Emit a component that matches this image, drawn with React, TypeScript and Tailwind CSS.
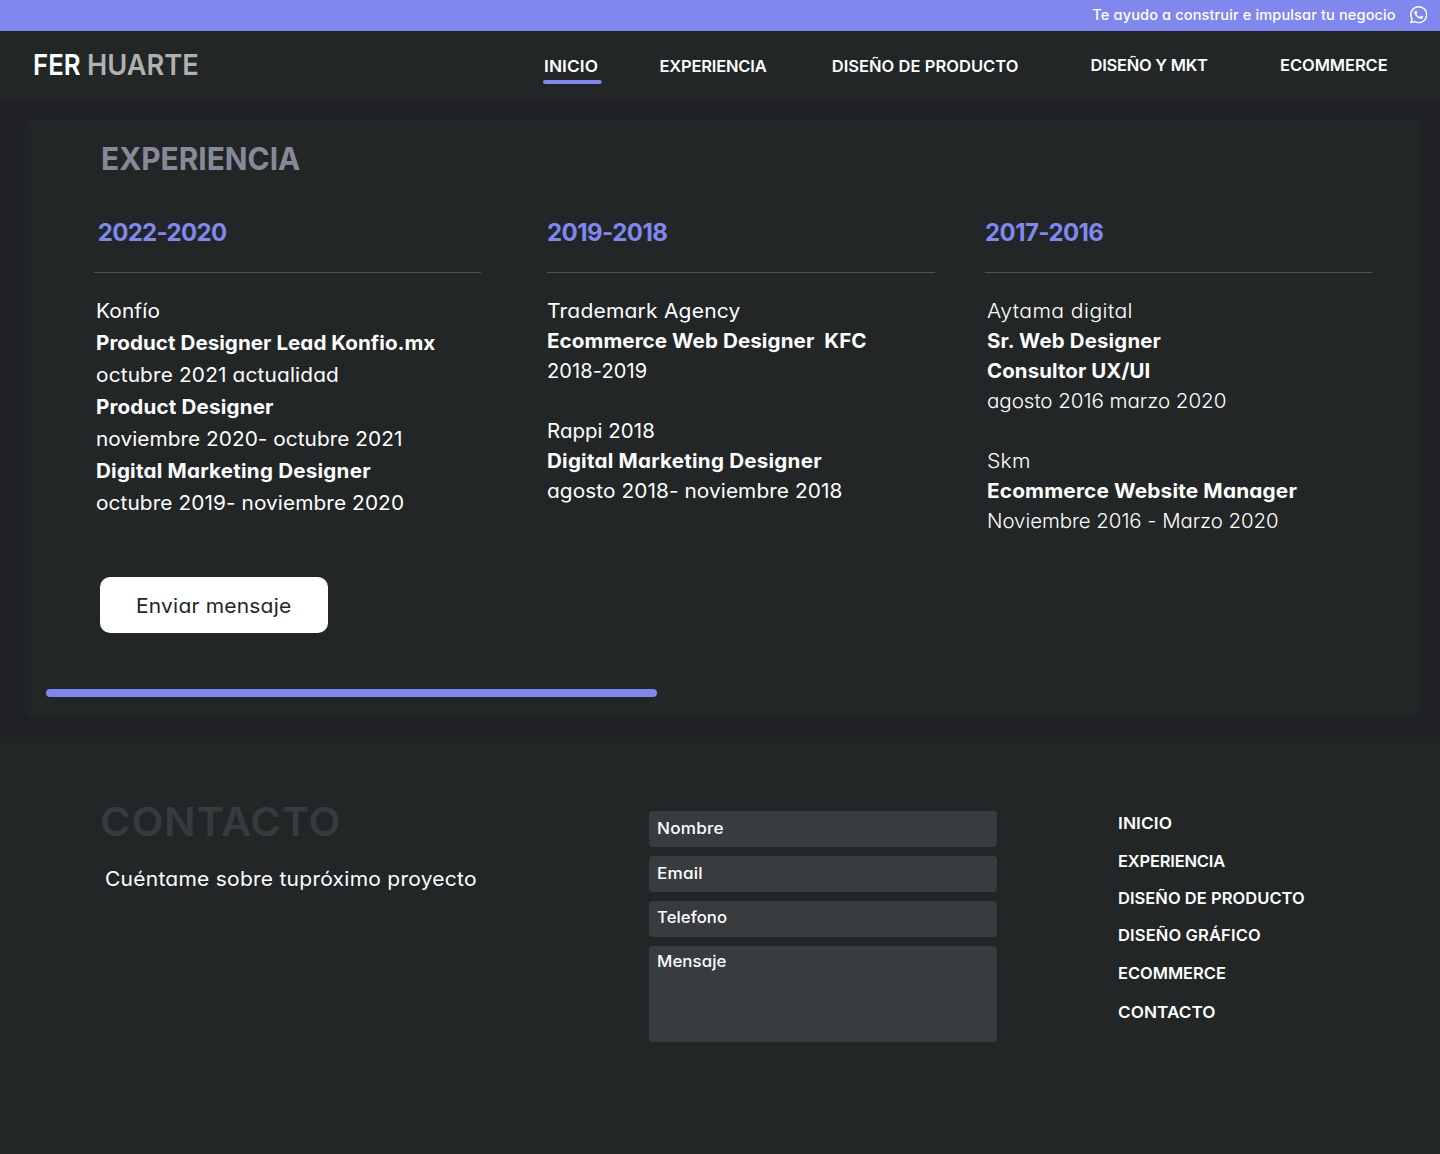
import { BsWhatsapp } from "react-icons/bs";

type Line = { text: string; className: string };

const navLinks: Line[] = [
  { text: "INICIO", className: "ml-[543.5px] scale-x-[1.05] tracking-[0.08px] pt-0.5" },
  { text: "EXPERIENCIA", className: "ml-[659.5px] tracking-[-0.19px] pt-0.5" },
  { text: "DISEÑO DE PRODUCTO", className: "ml-[831.7px] tracking-[0.04px] pt-0.5" },
  { text: "DISEÑO Y MKT", className: "ml-[1090.5px] tracking-[-0.25px]" },
  { text: "ECOMMERCE", className: "ml-[1280px] tracking-[-0.06px]" },
];

const konfio: Line[] = [
  { text: "Konfío", className: "scale-x-[1.04] tracking-[0.14px]" },
  { text: "Product Designer Lead Konfio.mx", className: "font-bold scale-x-[1.03] tracking-[0.03px]" },
  { text: "octubre 2021 actualidad", className: "scale-x-[1.04] tracking-[0.16px]" },
  { text: "Product Designer", className: "font-bold scale-x-[1.03] tracking-[0.16px]" },
  { text: "noviembre 2020- octubre 2021", className: "scale-x-[1.04] tracking-[0.04px]" },
  { text: "Digital Marketing Designer", className: "font-bold scale-x-[1.03] tracking-[0.21px]" },
  { text: "octubre 2019- noviembre 2020", className: "scale-x-[1.04] tracking-[0.09px]" },
];

const agency: Line[] = [
  { text: "Trademark Agency", className: "scale-x-[1.05] tracking-[0.2px]" },
  { text: "Ecommerce Web Designer  KFC", className: "font-bold scale-x-[1.03] tracking-[0.08px]" },
  { text: "2018-2019", className: "tracking-[0.12px]" },
  { text: "", className: "" },
  { text: "Rappi 2018", className: "scale-x-[1.02] tracking-[0.06px]" },
  { text: "Digital Marketing Designer", className: "font-bold scale-x-[1.03] tracking-[0.21px]" },
  { text: "agosto 2018- noviembre 2018", className: "scale-x-[1.04] tracking-[0.08px]" },
];

const digital: Line[] = [
  { text: "Aytama digital", className: "font-[350] scale-x-[1.06] tracking-[0.38px]" },
  { text: "Sr. Web Designer", className: "font-bold scale-x-[1.02] tracking-[0.17px]" },
  { text: "Consultor UX/UI", className: "font-bold scale-x-[1.02] tracking-[0.11px]" },
  { text: "agosto 2016 marzo 2020", className: "font-[350] scale-x-[1.03] tracking-[-0.06px]" },
  { text: "", className: "" },
  { text: "Skm", className: "font-[350] scale-x-[1.06] tracking-[0.2px]" },
  { text: "Ecommerce Website Manager", className: "font-bold scale-x-[1.04] tracking-[0.15px]" },
  { text: "Noviembre 2016 - Marzo 2020", className: "font-[350] scale-x-[1.02] tracking-[-0.04px]" },
];

const footerLinks: Line[] = [
  { text: "INICIO", className: "h-[38px] scale-x-[1.05] tracking-[0.08px]" },
  { text: "EXPERIENCIA", className: "h-[37px] tracking-[-0.19px]" },
  { text: "DISEÑO DE PRODUCTO", className: "h-[37px] tracking-[0.04px]" },
  { text: "DISEÑO GRÁFICO", className: "h-[38px] tracking-[0.14px]" },
  { text: "ECOMMERCE", className: "h-[39px] tracking-[-0.03px]" },
  { text: "CONTACTO", className: "h-[38px] scale-x-[1.04] tracking-[0.06px]" },
];

const fields: (Line & { box: string })[] = [
  { text: "Nombre", box: "h-9 leading-[34px]", className: "scale-x-[1.07] tracking-[0.22px]" },
  { text: "Email", box: "h-9 leading-[34px]", className: "scale-x-[1.07] tracking-[0.22px]" },
  { text: "Telefono", box: "h-9 leading-[32px]", className: "scale-x-[1.04] tracking-[0.1px]" },
  { text: "Mensaje", box: "h-24 leading-[30px]", className: "scale-x-[1.05] tracking-[0.08px]" },
];

function Column({
  className,
  years,
  yearsClass,
  bodyClass,
  lines,
}: {
  className: string;
  years: string;
  yearsClass: string;
  bodyClass: string;
  lines: Line[];
}) {
  return (
    <section className={className}>
      <h2 className={`pt-px text-[24px] font-bold leading-8 text-[#8088ee] ${yearsClass}`}>{years}</h2>
      <div className="mt-[23px] h-px bg-[#4e5253]" />
      <div className={`whitespace-pre text-[20px] ${bodyClass}`}>
        {lines.map((line, i) => (
          <p key={i} className={`w-fit origin-left ${line.className}`}>
            {line.text || " "}
          </p>
        ))}
      </div>
    </section>
  );
}

export default function App() {
  return (
    <div className="flex h-[1154px] w-[1440px] flex-col overflow-hidden bg-[#202124] font-['Inter',sans-serif] text-white [font-feature-settings:'cv11']">
      <div className="flex h-[31px] shrink-0 items-center justify-end bg-[#8088ee] pb-[1.5px] pr-[13px]">
        <span className="mr-[14px] origin-right scale-x-[1.04] text-[14px] font-[450] leading-none tracking-[0.12px]">
          Te ayudo a construir e impulsar tu negocio
        </span>
        <BsWhatsapp className="size-[17.5px]" />
      </div>

      <header className="flex h-[68px] shrink-0 items-center bg-[#222627]">
        <div className="flex w-0 whitespace-nowrap pb-0.5 pl-[33px] text-[29px] font-semibold leading-none">
          <span className="w-[54px] shrink-0 origin-left scale-x-[0.89]">FER</span>
          <span className="origin-left scale-x-[0.938] text-[#b0b0b0]">HUARTE</span>
        </div>
        <nav className="-ml-[33px] grid text-[16.5px] font-semibold leading-5">
          {navLinks.map((link) => (
            <a
              key={link.text}
              className={`relative col-start-1 row-start-1 origin-left justify-self-start self-center whitespace-nowrap ${link.className}`}
            >
              {link.text}
              {link.text === "INICIO" && (
                <span className="absolute -left-[1.4px] top-[26px] h-1 w-[56.2px] rounded-full bg-[#8088ee]" />
              )}
            </a>
          ))}
        </nav>
      </header>

      <main className="ml-[25px] mt-5 h-[598px] w-[1396px] shrink-0 rounded-lg bg-[#222627] pt-6">
        <h1 className="ml-[75.8px] w-fit origin-left scale-x-[0.948] text-[31.5px] font-bold leading-[31px] text-[#888998]">
          EXPERIENCIA
        </h1>
        <div className="ml-[69px] mt-[42px] flex h-[320px]">
          <Column
            className="w-[387px]"
            years="2022-2020"
            yearsClass="pl-[3.7px] tracking-[-0.67px]"
            bodyClass="mt-[22px] pl-[2px] leading-8"
            lines={konfio}
          />
          <Column
            className="ml-[66px] w-[388px]"
            years="2019-2018"
            yearsClass="tracking-[-0.54px]"
            bodyClass="mt-[23px] leading-[30px]"
            lines={agency}
          />
          <Column
            className="ml-[50px] w-[387px]"
            years="2017-2016"
            yearsClass="tracking-[-0.58px]"
            bodyClass="mt-[23px] pl-[2px] leading-[30px]"
            lines={digital}
          />
        </div>
        <button className="ml-[75px] mt-[41px] flex h-14 w-[228px] items-center rounded-[10px] bg-white pl-9 pt-px text-[20px] tracking-[0.19px] text-[#222627]">
          <span className="origin-left scale-x-[1.05]">Enviar mensaje</span>
        </button>
        <div className="ml-[21px] mt-14 h-2 w-[611px] rounded-full bg-[#8088ee]" />
      </main>

      <footer className="mt-5 flex grow bg-[#222627]">
        <div className="w-[649px] pt-[65px]">
          <h2 className="ml-[99.5px] w-fit origin-left scale-x-[1.04] text-[40px] font-semibold leading-10 tracking-[0.7px] text-[#373b3e]">
            CONTACTO
          </h2>
          <p className="ml-[105px] mt-[22px] w-fit origin-left scale-x-[1.05] text-[20px] leading-[30px] tracking-[0.24px]">
            Cuéntame sobre tupróximo proyecto
          </p>
        </div>
        <form className="flex w-[348px] flex-col gap-[9px] pt-[74px] text-[16px] font-[450]">
          {fields.map((field) => (
            <label key={field.text} className={`block rounded bg-[#393c3f] pl-2 ${field.box}`}>
              <span className={`block w-fit origin-left ${field.className}`}>{field.text}</span>
            </label>
          ))}
        </form>
        <nav className="ml-[121px] flex flex-col items-start pt-[76px] text-[16.5px] font-semibold leading-5">
          {footerLinks.map((link) => (
            <a key={link.text} className={`origin-left ${link.className}`}>
              {link.text}
            </a>
          ))}
        </nav>
      </footer>
    </div>
  );
}
